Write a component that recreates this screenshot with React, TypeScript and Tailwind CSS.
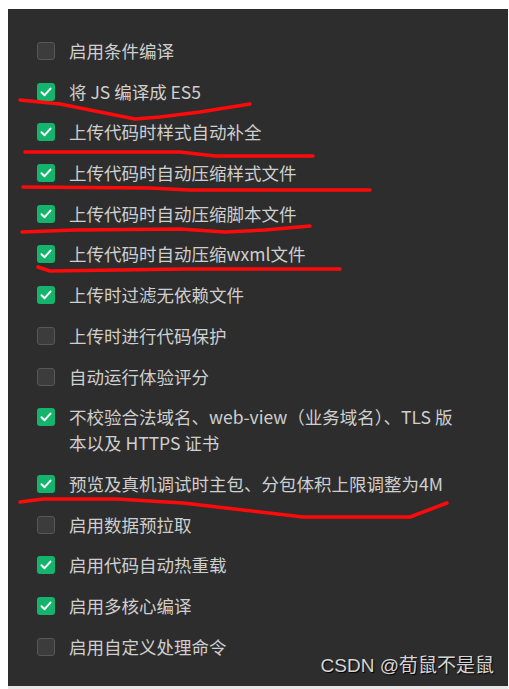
import React from "react";

type Item = { label: React.ReactNode; checked: boolean };

const items: Item[] = [
  { label: "启用条件编译", checked: false },
  { label: "将 JS 编译成 ES5", checked: true },
  { label: "上传代码时样式自动补全", checked: true },
  { label: "上传代码时自动压缩样式文件", checked: true },
  { label: "上传代码时自动压缩脚本文件", checked: true },
  { label: "上传代码时自动压缩wxml文件", checked: true },
  { label: "上传时过滤无依赖文件", checked: true },
  { label: "上传时进行代码保护", checked: false },
  { label: "自动运行体验评分", checked: false },
  {
    label: (
      <>
        不校验合法域名、web-view（业务域名）、TLS 版
        <br />
        本以及 HTTPS 证书
      </>
    ),
    checked: true,
  },
  { label: "预览及真机调试时主包、分包体积上限调整为4M", checked: true },
  { label: "启用数据预拉取", checked: false },
  { label: "启用代码自动热重载", checked: true },
  { label: "启用多核心编译", checked: true },
  { label: "启用自定义处理命令", checked: false },
];

function Box({ checked }: { checked: boolean }) {
  if (checked) {
    return (
      <div className="mt-[4px] w-[18px] h-[18px] shrink-0 rounded-[3px] bg-[#15b46c] flex items-center justify-center">
        <svg width="12" height="10" viewBox="0 0 12 10" fill="none">
          <path d="M1.5 5.2 L4.6 8.2 L10.5 1.6" stroke="#ffffff" strokeWidth="2" strokeLinecap="round" strokeLinejoin="round" />
        </svg>
      </div>
    );
  }
  return (
    <div className="mt-[4px] w-[18px] h-[18px] shrink-0 rounded-[3px] bg-[#3c3c3c] border border-[#575757]" />
  );
}

export default function App() {
  return (
    <div className="relative w-[509px] h-[689px] bg-white pl-[8px] pt-[9px] pr-[1px] overflow-hidden">
      <div className="relative h-[677px] bg-[#2d2d2d] pl-[29px] pt-[29px]">
        <div
          className="flex flex-col gap-[14.7px] text-[#cfcfcf] text-[17.5px] leading-[26px]"
          style={{ fontFamily: '"Noto Sans CJK SC", "Noto Sans", sans-serif' }}
        >
          {items.map((it, i) => (
            <div key={i} className="flex items-start gap-[14px]">
              <Box checked={it.checked} />
              <div className="whitespace-nowrap">{it.label}</div>
            </div>
          ))}
        </div>
        <div
          className="absolute right-[14px] bottom-[6px] text-[19px] text-[#d6d6d6] [text-shadow:1px_1px_1px_#000]"
          style={{ fontFamily: '"Liberation Sans", "Noto Sans CJK SC", sans-serif' }}
        >
          CSDN @荀鼠不是鼠
        </div>
      </div>
      <div className="h-[3px] bg-[#e6e6e6]" />
      <svg className="absolute left-0 top-0 pointer-events-none" width="509" height="689" viewBox="0 0 509 689" fill="none">
        <g stroke="#ff0a0a" strokeWidth="3.5" strokeLinecap="round" strokeLinejoin="round">
          <polyline points="20,100 60,104 100,112 135,119 160,117 200,112 250,104" />
          <polyline points="25,152 180,152 215,156 313,156" />
          <polyline points="23,187 150,188 190,190 370,190" />
          <polyline points="22,232 75,230 180,229 225,232 265,230 310,226" />
          <polyline points="38,267 50,271 183,269 340,269" />
          <polyline points="20,502 43,499 117,499 183,503 303,517 410,517 447,503" />
        </g>
      </svg>
    </div>
  );
}
